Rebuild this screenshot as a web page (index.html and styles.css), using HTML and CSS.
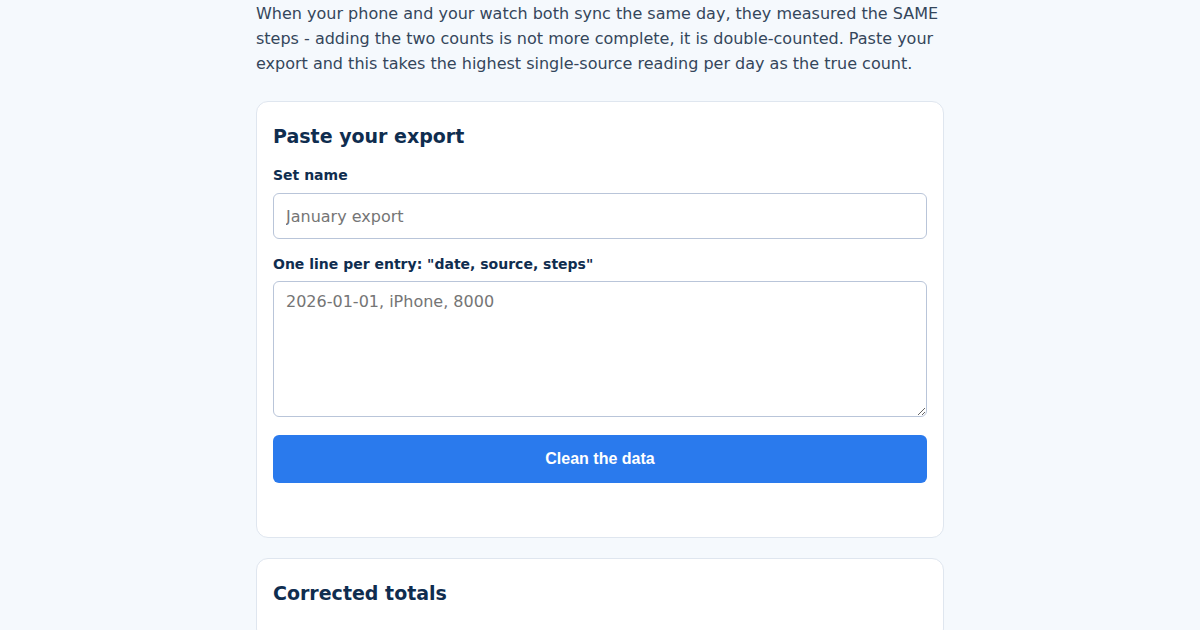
FILE: index.html
```html
<!DOCTYPE html>
<html lang="en">
<head>
    <meta charset="UTF-8">
    <meta name="viewport" content="width=device-width, initial-scale=1.0">
    <title>Step Count Cleaner</title>
    <link rel="stylesheet" href="styles.css">
</head>
<body>
    <main class="page">
        <p class="intro">When your phone and your watch both sync the same day, they measured the SAME steps - adding the two counts is not more complete, it is double-counted. Paste your export and this takes the highest single-source reading per day as the true count.</p>

        <section class="card form-card">
            <h2>Paste your export</h2>
            <form id="clean-form">
                <label for="set-name">Set name</label>
                <input type="text" id="set-name" name="setName" placeholder="January export">

                <label for="entries" class="entries-label">One line per entry: "date, source, steps"</label>
                <textarea id="entries" name="entries" placeholder="2026-01-01, iPhone, 8000"></textarea>

                <button type="submit">Clean the data</button>
            </form>
        </section>

        <section class="card">
            <h2>Corrected totals</h2>
            <div class="totals"></div>
        </section>
    </main>
</body>
</html>
```

FILE: styles.css
```css
* {
    box-sizing: border-box;
}

body {
    margin: 0;
    background-color: #f5f9fd;
    color: #34465b;
    font-family: 'DejaVu Sans', sans-serif;
}

.page {
    width: 688px;
    margin: 0 auto;
    padding-top: 1px;
}

.intro {
    margin: 0 0 25px;
    font-size: 16px;
    line-height: 25px;
}

.card {
    background: white;
    border: 1px solid #dfe6ef;
    border-radius: 12px;
    padding: 23px 16px 16px;
    margin-bottom: 20px;
}

.form-card {
    padding-bottom: 54px;
}

.card h2 {
    margin: 0 0 19px;
    font-size: 19px;
    line-height: 23px;
    color: #0f2d4f;
}

label {
    display: block;
    font-size: 14px;
    font-weight: bold;
    line-height: 17px;
    color: #0f2d4f;
    margin-bottom: 9px;
}

.entries-label {
    margin-bottom: 8px;
}

input, textarea {
    display: block;
    width: 100%;
    border: 1px solid #b9c5d9;
    border-radius: 6px;
    font-family: 'DejaVu Sans', sans-serif;
    font-size: 16px;
    line-height: 19px;
    color: #1f2d3d;
    background: white;
}

input {
    height: 46px;
    padding: 0 12px;
    margin-bottom: 17px;
}

textarea {
    height: 136px;
    padding: 10px 12px;
    margin-bottom: 18px;
    resize: vertical;
}

input::placeholder, textarea::placeholder {
    color: #757575;
}

button {
    display: block;
    width: 100%;
    height: 48px;
    border: none;
    border-radius: 6px;
    background-color: #2a7aed;
    color: white;
    font-family: 'Liberation Sans', Arial, sans-serif;
    font-size: 16px;
    font-weight: bold;
    cursor: pointer;
}

button:hover {
    background-color: #1f68d4;
}
```
